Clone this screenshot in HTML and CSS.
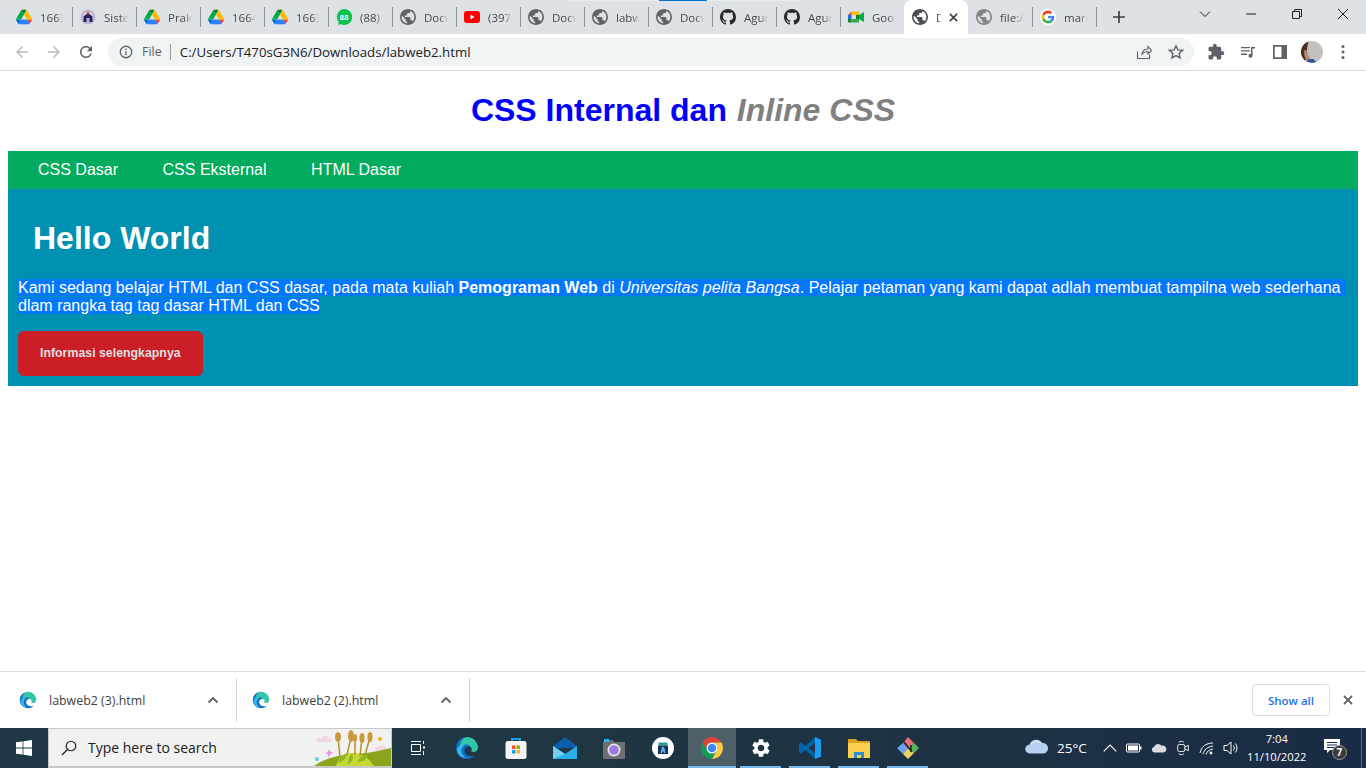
FILE: index.html
```html
<!DOCTYPE html>
<html lang="en">
<head>
    <meta charset="utf-8">
    <meta name="viewport" content="width=device-width, initial-scale=1.0">
    <title>labweb2</title>
    <link rel="stylesheet" href="styles.css">
</head>
<body>
    <svg class="sprite" aria-hidden="true">
        <symbol id="drive" viewBox="0 0 87.3 78">
            <path d="m6.6 66.85 3.85 6.65c.8 1.4 1.95 2.5 3.3 3.3l13.75-23.8h-27.5c0 1.55.4 3.1 1.2 4.5z" fill="#0066da"/>
            <path d="m43.65 25-13.75-23.8c-1.35.8-2.5 1.9-3.3 3.3l-25.4 44a9.06 9.06 0 0 0 -1.2 4.5h27.5z" fill="#00ac47"/>
            <path d="m73.55 76.8c1.35-.8 2.5-1.9 3.3-3.3l1.6-2.75 7.65-13.25c.8-1.4 1.2-2.95 1.2-4.5h-27.502l5.852 11.5z" fill="#ea4335"/>
            <path d="m43.65 25 13.75-23.8c-1.35-.8-2.9-1.2-4.5-1.2h-18.5c-1.6 0-3.15.45-4.5 1.2z" fill="#00832d"/>
            <path d="m59.8 53h-32.3l-13.75 23.8c1.35.8 2.9 1.2 4.5 1.2h50.8c1.6 0 3.15-.45 4.5-1.2z" fill="#2684fc"/>
            <path d="m73.4 26.5-12.7-22c-.8-1.4-1.95-2.5-3.3-3.3l-13.75 23.8 16.15 28h27.45c0-1.55-.4-3.1-1.2-4.5z" fill="#ffba00"/>
        </symbol>
        <symbol id="globe" viewBox="2 2 20 20">
            <path fill="currentColor" d="M12 2C6.48 2 2 6.48 2 12s4.48 10 10 10 10-4.48 10-10S17.52 2 12 2zm-1 17.93c-3.95-.49-7-3.85-7-7.93 0-.62.08-1.21.21-1.79L9 15v1c0 1.1.9 2 2 2v1.93zm6.9-2.54c-.26-.81-1-1.39-1.9-1.39h-1v-3c0-.55-.45-1-1-1H8v-2h2c.55 0 1-.45 1-1V7h2c1.1 0 2-.9 2-2v-.41c2.93 1.19 5 4.06 5 7.41 0 2.08-.8 3.97-2.1 5.39z"/>
        </symbol>
        <symbol id="github" viewBox="0 0 16 16">
            <path fill="#24292f" d="M8 0C3.58 0 0 3.58 0 8c0 3.54 2.29 6.53 5.47 7.59.4.07.55-.17.55-.38 0-.19-.01-.82-.01-1.49-2.01.37-2.53-.49-2.69-.94-.09-.23-.48-.94-.82-1.13-.28-.15-.68-.52-.01-.53.63-.01 1.08.58 1.23.82.72 1.21 1.87.87 2.33.66.07-.52.28-.87.51-1.07-1.78-.2-3.64-.89-3.64-3.95 0-.87.31-1.59.82-2.15-.08-.2-.36-1.02.08-2.12 0 0 .67-.21 2.2.82.64-.18 1.32-.27 2-.27.68 0 1.36.09 2 .27 1.53-1.04 2.2-.82 2.2-.82.44 1.1.16 1.92.08 2.12.51.56.82 1.27.82 2.15 0 3.07-1.87 3.75-3.65 3.95.29.25.54.73.54 1.48 0 1.07-.01 1.93-.01 2.2 0 .21.15.46.55.38A8.013 8.013 0 0016 8c0-4.42-3.58-8-8-8z"/>
        </symbol>
        <symbol id="edge" viewBox="0 0 24 24">
            <path fill="#0f6fc6" d="M12 1C5.900 1 1 5.900 1 12s4.900 11 11 11c3.200 0 6-1.300 8-3.400-3.700 1.400-8.200.8-10-2.600-1.200-2.400-.2-5.600 2.800-6.400C14.500 10 16 10.800 17 12 16.500 9 14 7.500 11.500 7.500 8 7.500 5.500 9.800 4.500 13 4.500 6.500 8 1 12 1z"/>
            <path fill="#2fc7a8" d="M12 1c5.500 0 10 3.900 11 9.500.4 3-1.500 5.500-4.600 5.500-1.300 0-2.200-.4-2.300-.9 1.100-1 .8-3-.5-4.400C13.800 8.500 10 7.700 7 9.500 5.600 10.300 4.600 11.500 4 13 4.500 6.500 8 1 12 1z"/>
            <path fill="#37b5ee" d="M2 14c.5-2.500 2-4.500 5-5 2-.3 3 .3 3 .3-2.500 1-4 3.500-3.700 6.200.3 2.500 2 4.700 4.700 6.400C6 22 2.500 18.500 2 14z"/>
        </symbol>
    </svg>

    <header class="tabstrip">
        <div class="tabstrip-top"><span></span></div>
        <div class="tab"><svg class="fav"><use href="#drive"/></svg><span class="tab-title">1663 Drive</span></div>
        <div class="tab">
            <svg class="fav" viewBox="0 0 16 16"><circle cx="8" cy="8" r="7.500" fill="#b9b6d2"/><circle cx="8" cy="8" r="5.500" fill="#d5d3e4"/><path fill="#25235f" d="M8 4 12.500 7.500V13h-9V7.500z"/><rect x="6.500" y="9" width="3" height="4" fill="#b9b6d2"/><circle cx="8" cy="4" r="1.300" fill="#d8503f"/></svg>
            <span class="tab-title">Sistem Info</span>
        </div>
        <div class="tab"><svg class="fav"><use href="#drive"/></svg><span class="tab-title">Praktikum</span></div>
        <div class="tab"><svg class="fav"><use href="#drive"/></svg><span class="tab-title">1664 Drive</span></div>
        <div class="tab"><svg class="fav"><use href="#drive"/></svg><span class="tab-title">1663 Drive</span></div>
        <div class="tab">
            <svg class="fav" viewBox="0 0 16 16"><path fill="#08c14f" d="M8 0a8 8 0 1 1-3.700 15L2 16l.8-2.900A8 8 0 0 1 8 0z"/><text x="8" y="11" class="wa-count">88</text></svg>
            <span class="tab-title">(88) WhatsApp</span>
        </div>
        <div class="tab"><svg class="fav globe"><use href="#globe"/></svg><span class="tab-title">Document</span></div>
        <div class="tab">
            <svg class="fav" viewBox="0 0 16 16"><rect y="2" width="16" height="12" rx="3" fill="#f00"/><path fill="#fff" d="M6.500 5.500 10.500 8l-4 2.500z"/></svg>
            <span class="tab-title">(397) YouTube</span>
        </div>
        <div class="tab"><svg class="fav globe"><use href="#globe"/></svg><span class="tab-title">Document</span></div>
        <div class="tab"><svg class="fav globe"><use href="#globe"/></svg><span class="tab-title">labweb.html</span></div>
        <div class="tab"><svg class="fav globe"><use href="#globe"/></svg><span class="tab-title">Document</span></div>
        <div class="tab"><svg class="fav"><use href="#github"/></svg><span class="tab-title">Agung/web</span></div>
        <div class="tab"><svg class="fav"><use href="#github"/></svg><span class="tab-title">Agung/web</span></div>
        <div class="tab tab-before-active">
            <svg class="fav" viewBox="0 0 16 16"><path fill="#fbbc04" d="M3.500 2.500H11V6H3.500z"/><path fill="#ea4335" d="M3.500 2.500V6H0z"/><path fill="#1a73e8" d="M0 6h3.500v4H0z"/><path fill="#188038" d="M0 10h3.500v3.500H1a1 1 0 0 1-1-1z"/><path fill="#34a853" d="M3.500 10H11v3.500H3.500z"/><path fill="#00ac47" d="M11 6 16 3v10l-5-3z"/><rect x="8" y="6" width="3" height="4" fill="#00832d"/></svg>
            <span class="tab-title">Google Meet</span>
        </div>
        <div class="tab tab-active">
            <svg class="fav globe-dark"><use href="#globe"/></svg>
            <span class="tab-title">Document</span>
            <svg class="tab-close" viewBox="0 0 10 10"><path d="M1 1l8 8M9 1l-8 8"/></svg>
        </div>
        <div class="tab"><svg class="fav globe-light"><use href="#globe"/></svg><span class="tab-title">file:///C:/</span></div>
        <div class="tab">
            <svg class="fav" viewBox="-6 -6 60 60"><circle cx="24" cy="24" r="30" fill="#fff"/>
                <path fill="#EA4335" d="M24 9.500c3.540 0 6.710 1.220 9.210 3.600l6.850-6.850C35.900 2.380 30.470 0 24 0 14.620 0 6.510 5.380 2.560 13.220l7.980 6.190C12.430 13.720 17.740 9.500 24 9.500z"/>
                <path fill="#4285F4" d="M46.980 24.550c0-1.570-.15-3.090-.38-4.550H24v9.020h12.940c-.58 2.960-2.260 5.480-4.780 7.180l7.730 6c4.510-4.180 7.090-10.360 7.090-17.650z"/>
                <path fill="#FBBC05" d="M10.530 28.590c-.48-1.450-.76-2.990-.76-4.590s.27-3.140.76-4.590l-7.980-6.190C.92 16.460 0 20.120 0 24c0 3.880.92 7.540 2.560 10.780l7.970-6.190z"/>
                <path fill="#34A853" d="M24 48c6.480 0 11.930-2.130 15.890-5.810l-7.730-6c-2.150 1.450-4.920 2.300-8.160 2.300-6.260 0-11.570-4.220-13.470-9.910l-7.980 6.190C6.510 42.620 14.620 48 24 48z"/>
            </svg>
            <span class="tab-title">markdown</span>
        </div>
        <svg class="new-tab" viewBox="0 0 12 12"><path d="M6 0v12M0 6h12"/></svg>
        <div class="window-controls">
            <svg viewBox="0 0 12 12"><path d="M1 3.500 6 8.500l5-5"/></svg>
            <svg viewBox="0 0 12 12"><path d="M1 6h10"/></svg>
            <svg viewBox="0 0 12 12"><path d="M1.500 3.500h7v7h-7zM3.500 3.500v-2h7v7h-2"/></svg>
            <svg viewBox="0 0 12 12"><path d="M1 1l10 10M11 1 1 11"/></svg>
        </div>
    </header>

    <div class="toolbar">
        <svg class="tool tool-off" viewBox="0 0 24 24"><path d="M20 11H7.830l5.590-5.590L12 4l-8 8 8 8 1.410-1.410L7.830 13H20v-2z"/></svg>
        <svg class="tool tool-off" viewBox="0 0 24 24"><path d="M12 4l-1.410 1.410L16.170 11H4v2h12.170l-5.580 5.590L12 20l8-8z"/></svg>
        <svg class="tool" viewBox="0 0 24 24"><path d="M17.650 6.350C16.200 4.900 14.210 4 12 4c-4.420 0-7.990 3.580-7.990 8s3.570 8 7.990 8c3.730 0 6.840-2.550 7.730-6h-2.080c-.82 2.330-3.040 4-5.650 4-3.310 0-6-2.690-6-6s2.690-6 6-6c1.660 0 3.140.69 4.220 1.780L13 11h7V4l-2.350 2.350z"/></svg>
        <div class="omnibox">
            <svg class="omni-info" viewBox="0 0 14 14"><circle cx="7" cy="7" r="5.750"/><path d="M7 6.200v4M7 3.600v1.400"/></svg>
            <span class="omni-file">File</span>
            <span class="omni-url">C:/Users/T470sG3N6/Downloads/labweb2.html</span>
            <svg class="omni-share" viewBox="0 0 16 16"><path d="M1.500 7.500v7h12v-4M6 10c.5-3 2.500-5 6-5V2.500L15.500 6.500 12 10V7.500C9.500 7.500 7.500 8.500 6 10z"/></svg>
            <svg class="omni-star" viewBox="0 0 16 16"><path d="M8 1.800l1.900 4.100 4.500.5-3.300 3 .9 4.500L8 11.600l-4 2.300.9-4.500-3.300-3 4.500-.5z"/></svg>
        </div>
        <svg class="tool tool-ext" viewBox="0 0 24 24"><path d="M20.500 11H19V7c0-1.100-.9-2-2-2h-4V3.500C13 2.120 11.880 1 10.500 1S8 2.120 8 3.500V5H4c-1.100 0-1.990.9-1.990 2v3.800H3.500c1.490 0 2.700 1.210 2.700 2.700s-1.210 2.700-2.700 2.700H2V20c0 1.100.9 2 2 2h3.800v-1.500c0-1.490 1.210-2.700 2.700-2.700 1.490 0 2.700 1.210 2.700 2.700V22H17c1.100 0 2-.9 2-2v-4h1.500c1.380 0 2.500-1.120 2.500-2.500S21.880 11 20.500 11z"/></svg>
        <svg class="tool tool-media" viewBox="0 0 16 16"><path d="M1 3h9v1.300H1zM1 6.300h9v1.300H1zM1 9.600h6v1.300H1zM11 3h4v1.600h-2.500v7.200a2 2 0 1 1-1.500-1.900z"/></svg>
        <svg class="tool tool-panel" viewBox="0 0 14 14"><path fill-rule="evenodd" d="M0 0h14v14H0zM1.700 1.700v10.600h6.800V1.700z"/></svg>
        <svg class="avatar" viewBox="0 0 22 22"><circle cx="11" cy="11" r="11" fill="#c4c1bc"/><path fill="#4a3126" d="M7.500.6C3 2 0 6.200 0 11c0 3.300 1.400 6.200 3.700 8.200l5-1.200C7 15 5.500 12 6 8c.2-2.500 1-5 1.500-7.400z"/><path fill="#b98a70" d="M3.500 9c1.500-.5 2.500 1 3 3s1.500 4 2.500 6l-3 2C3.500 17 2.500 12 3.500 9z"/><path fill="#2e4fa3" d="M5 20c2-1.800 5-2.500 8-1.500L15 21a11 11 0 0 1-10-1z"/></svg>
        <svg class="tool tool-menu" viewBox="0 0 4 16"><circle cx="2" cy="2.500" r="1.500"/><circle cx="2" cy="8" r="1.500"/><circle cx="2" cy="13.500" r="1.500"/></svg>
    </div>

    <main class="page">
        <h1 class="page-title">CSS Internal dan <em>Inline CSS</em></h1>
        <nav class="menu">
            <a href="#">CSS Dasar</a>
            <a href="#">CSS Eksternal</a>
            <a href="#">HTML Dasar</a>
        </nav>
        <section class="hero">
            <h1>Hello World</h1>
            <p><span class="picked">Kami sedang belajar HTML dan CSS dasar, pada mata kuliah <b>Pemograman Web</b> di <i>Universitas pelita Bangsa</i>. Pelajar petaman yang kami dapat adlah membuat tampilna web sederhana&nbsp; dlam rangka tag tag dasar HTML dan CSS</span></p>
            <a class="btn" href="#">Informasi selengkapnya</a>
        </section>
    </main>

    <div class="downloads">
        <div class="download">
            <svg class="dl-icon"><use href="#edge"/></svg>
            <span class="dl-name">labweb2 (3).html</span>
            <svg class="dl-caret" viewBox="0 0 12 8"><path d="M1.500 6.500 6 2l4.500 4.500"/></svg>
        </div>
        <div class="download">
            <svg class="dl-icon"><use href="#edge"/></svg>
            <span class="dl-name">labweb2 (2).html</span>
            <svg class="dl-caret" viewBox="0 0 12 8"><path d="M1.500 6.500 6 2l4.500 4.500"/></svg>
        </div>
        <button class="show-all">Show all</button>
        <svg class="dl-close" viewBox="0 0 10 10"><path d="M1 1l8 8M9 1l-8 8"/></svg>
    </div>

    <footer class="taskbar">
        <div class="start">
            <svg viewBox="0 0 16 16"><path fill="#fff" d="M0 2.300 6.600 1.400V7.600H0zM7.400 1.300 16 0V7.600H7.400zM0 8.400H6.600V14.600L0 13.700zM7.400 8.400H16V16L7.400 14.700z"/></svg>
        </div>
        <div class="search">
            <svg class="search-glass" viewBox="0 0 16 16"><circle cx="10" cy="6" r="4.750"/><path d="M6.500 9.500 1 15"/></svg>
            <span>Type here to search</span>
            <svg class="search-art" viewBox="0 0 77 37">
                <path fill="#f0d8dc" d="M2 12c0-3 3-4 5-3 2-3 7-3 8 0 3 0 4 3 2 4H3c-1 0-1-1-1-1zM61 20c0-2 3-3 4-2 2-3 6-2 7 1 2 0 2 3 1 3H62z"/>
                <path fill="#e98cf0" d="M15 20l1.500 3 3.500 1-3.500 1L15 29l-1-4-3-1 3-1z"/>
                <circle cx="3" cy="30" r="2" fill="#5cd0e0"/><circle cx="66" cy="10" r="2" fill="#f7a90c"/>
                <path fill="#8aa51c" d="M0 37c8-6 20-10 32-11 14-1 30-3 45-7v18z"/>
                <path fill="#c4d732" d="M22 37c2-8 8-14 16-13 10 0 16 4 22 13z"/>
                <path stroke="#b59224" stroke-width="1.500" fill="none" d="M26 28 24 8M33 26l4-18M41 26V8M46 27l2-18M50 30 56 8"/>
                <g fill="#c99a3c"><ellipse cx="24" cy="8" rx="3" ry="5"/><ellipse cx="37" cy="7" rx="3" ry="6"/><ellipse cx="41" cy="9" rx="2" ry="4"/><ellipse cx="48" cy="9" rx="2.500" ry="5"/><ellipse cx="56" cy="8" rx="2.500" ry="5"/></g>
                <path fill="#8fb622" d="M24 34c2-5 6-10 9-9-1 4-3 7-9 9zM44 33c1-4 4-7 10-8-1 5-4 8-10 8zM34 35c0-4 1-8 4-10 2 4 1 8-4 10z"/>
            </svg>
        </div>
        <div class="task-apps">
            <div class="app">
                <svg class="ico" viewBox="0 0 16 16"><path fill="none" stroke="#fff" d="M1 1.500h10M1 14.500h10M1.500 4.500h9v7h-9zM13.500 1v3M13.500 11v4"/><rect x="13" y="6.500" width="2" height="2" fill="#fff"/></svg>
            </div>
            <div class="app">
                <svg class="ico ico-big"><use href="#edge"/></svg>
            </div>
            <div class="app">
                <svg class="ico ico-big" viewBox="0 0 24 24"><path fill="none" stroke="#1aa3e8" stroke-width="1.800" d="M8 7V3h8v4"/><rect x="1.500" y="5" width="21" height="18" rx="2.500" fill="#f4f4f4"/><rect x="8" y="9.500" width="3.500" height="3.500" fill="#f25022"/><rect x="12.500" y="9.500" width="3.500" height="3.500" fill="#7fba00"/><rect x="8" y="14" width="3.500" height="3.500" fill="#00a4ef"/><rect x="12.500" y="14" width="3.500" height="3.500" fill="#ffb900"/></svg>
            </div>
            <div class="app">
                <svg class="ico ico-big" viewBox="0 0 24 24"><path fill="#0d5ea8" d="M12 1 24 10v2H0v-2z"/><path fill="#29aeea" d="M0 10l12 8 12-8v13H0z"/><path fill="#6fd0f5" d="M0 10l12 8-12 5z"/></svg>
            </div>
            <div class="app">
                <svg class="ico ico-big" viewBox="0 0 24 24"><path fill="#6d6f72" d="M1 6h4l1-2h5l1 2h11v17H1z"/><path fill="#2cb5e8" d="M2 3h5v3H2z"/><circle cx="12" cy="14" r="6.500" fill="#e8e8e8"/><circle cx="12" cy="14" r="4.800" fill="#9a7be0"/></svg>
            </div>
            <div class="app">
                <svg class="ico ico-big" viewBox="0 0 24 24"><circle cx="12" cy="12" r="11" fill="#fff"/><path fill="#1fa088" d="M7.500 6.500h9v3h-9z"/><path fill="#17365f" d="M7 9.500h10v8.500H7z"/><path fill="#5fb0e8" d="M11 11h2l1.500 6h-1.500l-.3-1.500h-1.400L11 17H9.500z"/></svg>
            </div>
            <div class="app app-active running">
                <svg class="ico ico-big" viewBox="0 0 48 48">
                    <path fill="#db4437" d="M5 13A22 22 0 0 1 43 13H24A11 11 0 0 0 14.500 29.500Z"/>
                    <path fill="#0f9d58" d="M5 13L14.500 29.500A11 11 0 0 0 33.500 29.500L24 46A22 22 0 0 1 5 13Z"/>
                    <path fill="#ffcd40" d="M43 13A22 22 0 0 1 24 46L33.500 29.500A11 11 0 0 0 24 13Z"/>
                    <circle cx="24" cy="24" r="11" fill="#fff"/><circle cx="24" cy="24" r="8.500" fill="#4285f4"/>
                </svg>
            </div>
            <div class="app running">
                <svg class="ico ico-big gear" viewBox="0 0 24 24"><path d="M19.140 12.940c.04-.3.06-.61.06-.94 0-.32-.02-.64-.07-.94l2.030-1.580c.18-.14.23-.41.12-.61l-1.920-3.320c-.12-.22-.37-.29-.59-.22l-2.390.96c-.5-.38-1.030-.7-1.620-.94l-.36-2.540c-.04-.24-.24-.41-.48-.41h-3.840c-.24 0-.43.17-.47.41l-.36 2.540c-.59.24-1.130.57-1.620.94l-2.390-.96c-.22-.08-.47 0-.59.22L2.740 8.870c-.12.21-.08.47.12.61l2.030 1.580c-.05.3-.09.63-.09.94s.02.64.07.94l-2.030 1.580c-.18.14-.23.41-.12.61l1.920 3.320c.12.22.37.29.59.22l2.390-.96c.5.38 1.030.7 1.620.94l.36 2.540c.05.24.24.41.48.41h3.840c.24 0 .44-.17.47-.41l.36-2.540c.59-.24 1.130-.56 1.620-.94l2.390.96c.22.08.47 0 .59-.22l1.920-3.320c.12-.22.07-.47-.12-.61l-2.010-1.580zM12 15.600c-1.980 0-3.600-1.620-3.600-3.600s1.620-3.600 3.600-3.600 3.600 1.620 3.600 3.600-1.620 3.600-3.600 3.600z"/></svg>
            </div>
            <div class="app running">
                <svg class="ico ico-big" viewBox="0 0 24 24"><path fill="#0065a9" d="M17 1 7.500 10 3 6.500 1 7.500v9L3 17.500 7.500 14l9.500 9 6-2.500v-17zM17 7v10l-6.500-5z"/><path fill="#1f9cf0" d="M17 1l6 3v16.500L17 23z"/></svg>
            </div>
            <div class="app running">
                <svg class="ico ico-big" viewBox="0 0 24 24"><path fill="#d9a520" d="M1 3h8l2 2h12v3H1z"/><path fill="#fbd04f" d="M1 7h22v15H1z"/><path fill="#2e8fd0" d="M7 16h10v6h-3v-3h-4v3H7z"/></svg>
            </div>
            <div class="app running">
                <svg class="ico ico-big" viewBox="0 0 24 24"><path fill="#e8707a" d="M12 1 18 7l-6 5-5-5z"/><path fill="#6f9ff0" d="M1 12l6-5 5 5-5 6z"/><path fill="#e9d264" d="M12 12l6 5-6 6-5-5z"/><path fill="#5bb45c" d="M12 12l6-5 5 5-5 5z"/><path fill="none" stroke="#222" stroke-width="1.500" d="M8 6l8 10M15 9v7"/></svg>
            </div>
        </div>
        <div class="tray">
            <svg class="tray-cloud" viewBox="0 0 24 16"><path fill="#b7d2f0" d="M5 15.500a4.500 4.500 0 0 1-.5-9A7 7 0 0 1 17 5a5.300 5.300 0 0 1 1.500 10.500z"/><path fill="#dfeafa" d="M6 6a7 7 0 0 1 11-1c-3-1-8-1-11 1z"/></svg>
            <span class="tray-temp">25°C</span>
            <svg class="tray-ico tray-caret" viewBox="0 0 14 14"><path d="M1.500 10 7 4.500 12.500 10"/></svg>
            <svg class="tray-ico" viewBox="0 0 16 14"><rect x=".5" y="3" width="13" height="8" rx="1"/><rect x="2" y="4.500" width="10" height="5" class="solid"/><rect x="14" y="5.500" width="1.500" height="3" class="solid"/></svg>
            <svg class="tray-ico" viewBox="0 0 18 14"><path class="solid soft" d="M4 12a3.300 3.300 0 0 1-.5-6.500A5 5 0 0 1 12 4.500 3.800 3.800 0 0 1 14.500 12z"/></svg>
            <svg class="tray-ico" viewBox="0 0 14 18"><rect x="1" y="5" width="8" height="8" rx="2"/><path d="M9 8l4-2v6l-4-2M2 2.500C4 1 6 1 8 2.500M2 15.500c2 1.500 4 1.500 6 0"/></svg>
            <svg class="tray-ico" viewBox="0 0 16 16"><path d="M1 13C2 7 7 3 14 3M4 14c1-4 4-7 10-8M7 14.500c1-3 3-5 7-5.500"/><circle cx="12" cy="13" r="1.400" class="solid"/></svg>
            <svg class="tray-ico" viewBox="0 0 16 16"><path d="M1 5.500h3L8 2v12l-4-3.500H1zM10.500 5.500c1 1.500 1 3.500 0 5M12.500 3.500c2 2.500 2 6.500 0 9"/></svg>
            <div class="clock"><span>7:04</span><span>11/10/2022</span></div>
            <div class="notify">
                <svg viewBox="0 0 16 14"><path fill="#fff" fill-rule="evenodd" d="M0 0h16v11H6l-3 3v-3H0zM3 3v1h10V3zM3 5.500v1h10v-1zM3 8v1h7V8z"/></svg>
                <span class="notify-badge">7</span>
            </div>
            <div class="show-desktop"></div>
        </div>
    </footer>
</body>
</html>
```

FILE: styles.css
```css
* {
    box-sizing: border-box;
}

body {
    margin: 0;
    height: 100vh;
    display: flex;
    flex-direction: column;
    overflow: hidden;
    background: #ffffff;
    font-family: 'Liberation Sans', Arial, sans-serif;
}

.sprite {
    position: absolute;
    width: 0;
    height: 0;
}

/* browser tabs */
.tabstrip {
    position: relative;
    flex: none;
    height: 34px;
    display: flex;
    align-items: center;
    padding-left: 8px;
    background: #dee1e6;
    font-family: 'Open Sans', sans-serif;
}

.tabstrip-top {
    position: absolute;
    top: 0;
    left: 563px;
    width: 240px;
    height: 1px;
    background: #e6e8ec;
}

.tabstrip-top span {
    position: absolute;
    left: 96px;
    width: 48px;
    height: 1px;
    background: #0078d4;
}

.tab {
    position: relative;
    flex: none;
    width: 64px;
    height: 34px;
    display: flex;
    align-items: center;
    gap: 8px;
    padding: 0 8px;
    color: #45494e;
    font-size: 11.500px;
}

.tab::after {
    content: "";
    position: absolute;
    top: 7px;
    right: -1px;
    width: 1px;
    height: 20px;
    background: #8d9095;
}

.tab-before-active::after,
.tab-active::after {
    display: none;
}

.tab-active {
    background: #ffffff;
    border-radius: 8px 8px 0 0;
}

.fav {
    flex: none;
    width: 16px;
    height: 16px;
}

.globe {
    color: #5f6368;
}

.globe-dark {
    color: #4a4e53;
}

.globe-light {
    color: #80858a;
}

.wa-count {
    fill: #ffffff;
    font-size: 8px;
    font-weight: 700;
    text-anchor: middle;
    font-family: 'Liberation Sans', sans-serif;
}

.tab-title {
    flex: 1;
    min-width: 0;
    overflow: hidden;
    white-space: nowrap;
    -webkit-mask-image: linear-gradient(to right, #000 65%, transparent);
    mask-image: linear-gradient(to right, #000 65%, transparent);
}

.tab-active .tab-title {
    flex: none;
    width: 5px;
}

.tab-close {
    flex: none;
    width: 9px;
    height: 9px;
    fill: none;
    stroke: #3c4043;
    stroke-width: 1.800;
}

.new-tab {
    flex: none;
    width: 12px;
    height: 12px;
    margin-left: 17px;
    fill: none;
    stroke: #3c4043;
    stroke-width: 1.700;
}

.window-controls {
    margin-left: auto;
    display: flex;
    align-items: center;
    height: 34px;
    gap: 34px;
    padding-right: 17px;
    padding-bottom: 6px;
}

.window-controls svg {
    width: 12px;
    height: 12px;
    fill: none;
    stroke: #202124;
}

/* address bar */
.toolbar {
    flex: none;
    height: 37px;
    display: flex;
    align-items: center;
    padding: 0 0 1px 13px;
    background: #ffffff;
    border-bottom: 1px solid #dadce0;
}

.tool {
    flex: none;
    width: 18px;
    height: 18px;
    margin-right: 14px;
    fill: #5f6368;
}

.tool-off {
    fill: #b8bbbf;
}

.omnibox {
    flex: none;
    width: 1086px;
    height: 28px;
    margin: 0 13px 0 -1px;
    display: flex;
    align-items: center;
    padding-left: 11px;
    border-radius: 14px;
    background: #f0f3f4;
    font-family: 'Open Sans', sans-serif;
    font-size: 13.250px;
}

.omni-info {
    flex: none;
    width: 14px;
    height: 14px;
    fill: none;
    stroke: #5f6368;
    stroke-width: 1.300;
}

.omni-file {
    margin-left: 9px;
    padding-right: 8px;
    border-right: 1px solid #9a9da1;
    line-height: 16px;
    color: #5f6368;
    font-size: 12.500px;
}

.omni-url {
    margin-left: 9px;
    color: #202124;
}

.omni-share {
    flex: none;
    width: 16px;
    height: 16px;
    margin-left: auto;
    fill: none;
    stroke: #5f6368;
    stroke-width: 1.100;
}

.omni-star {
    flex: none;
    width: 16px;
    height: 16px;
    margin: 0 10px 0 16px;
    fill: none;
    stroke: #5f6368;
    stroke-width: 1.400;
}

.tool-ext {
    margin-right: 15px;
}

.tool-media {
    width: 16px;
    height: 16px;
    margin-right: 15px;
}

.tool-panel {
    width: 14px;
    height: 14px;
    margin: 0 14px 0 2px;
}

.avatar {
    flex: none;
    width: 22px;
    height: 22px;
    margin-right: 18px;
}

.tool-menu {
    width: 4px;
    height: 16px;
    margin: 0;
}

/* the page itself */
.page {
    flex: 1;
    min-height: 0;
    overflow: hidden;
    padding: 0 8px;
}

.page-title {
    margin: 21.440px 0;
    text-align: center;
    font-size: 32px;
    color: #0000ff;
}

.page-title em {
    padding-left: 1px;
    color: #808080;
}

.menu {
    display: flex;
    gap: 44.500px;
    padding: 10px 30px;
    background: #02ab5e;
}

.menu a {
    color: #ffffff;
    font-size: 16px;
    text-decoration: none;
}

.hero {
    padding: 10px;
    background: #0090b2;
    color: #ffffff;
}

.hero h1 {
    margin: 21.440px 0;
    padding-left: 15px;
    font-size: 32px;
}

.hero p {
    margin: 0 0 16px;
    font-size: 16px;
}

.picked {
    background: #0478fa;
}

.btn {
    display: inline-block;
    padding: 14px 22px;
    border-radius: 6px;
    background: #cb1e27;
    color: #dedede;
    font-size: 12.350px;
    font-weight: 700;
    line-height: 17px;
    text-decoration: none;
    vertical-align: top;
}

/* downloads shelf */
.downloads {
    flex: none;
    height: 57px;
    display: flex;
    align-items: center;
    padding-left: 4px;
    border-top: 1px solid #dadce0;
    background: #ffffff;
    font-family: 'Open Sans', sans-serif;
}

.download {
    flex: none;
    width: 233px;
    height: 44px;
    display: flex;
    align-items: center;
    padding-left: 15px;
    border-right: 1px solid #d0d2d5;
}

.dl-icon {
    flex: none;
    width: 18px;
    height: 18px;
}

.dl-name {
    margin-left: 12px;
    color: #3c4043;
    font-size: 12.400px;
}

.dl-caret {
    margin-left: auto;
    margin-right: 17px;
    width: 12px;
    height: 8px;
    fill: none;
    stroke: #5f6368;
    stroke-width: 1.800;
}

.show-all {
    margin-left: auto;
    width: 78px;
    height: 32px;
    background: #ffffff;
    border: 1px solid #dadce0;
    border-radius: 4px;
    color: #1a73e8;
    font-family: 'Open Sans', sans-serif;
    font-size: 11.500px;
    font-weight: 600;
}

.dl-close {
    width: 10px;
    height: 10px;
    margin: 0 13px;
    fill: none;
    stroke: #5f6368;
    stroke-width: 1.800;
}

/* windows taskbar */
.taskbar {
    flex: none;
    height: 40px;
    display: flex;
    background: linear-gradient(to right, #203845, #1f3542 50%, #1a2b45);
    font-family: 'Open Sans', sans-serif;
}

.start {
    flex: none;
    width: 48px;
    display: flex;
    align-items: center;
    justify-content: center;
}

.start svg {
    width: 16px;
    height: 16px;
}

.search {
    flex: none;
    width: 344px;
    display: flex;
    align-items: center;
    padding-left: 12px;
    background: #f1f1f1;
    border: 1px solid #c8c8c8;
    border-bottom-width: 2px;
    color: #202020;
    font-size: 14px;
}

.search-glass {
    flex: none;
    width: 16px;
    height: 16px;
    margin-right: 11px;
    fill: none;
    stroke: #202020;
    stroke-width: 1.200;
}

.search-art {
    width: 77px;
    height: 37px;
    margin-left: auto;
    align-self: flex-end;
}

.task-apps {
    display: flex;
    padding-left: 1px;
}

.app {
    position: relative;
    flex: none;
    width: 49px;
    display: flex;
    align-items: center;
    justify-content: center;
}

.app-active {
    width: 48px;
    margin-left: 1px;
    background: #4d5f69;
}

.running::after {
    content: "";
    position: absolute;
    left: 4px;
    right: 4px;
    bottom: 0;
    height: 2px;
    background: #76b9ed;
}

.app-active::after {
    left: 0;
    right: 0;
}

.ico {
    width: 16px;
    height: 16px;
}

.ico-big {
    width: 24px;
    height: 24px;
}

.gear {
    width: 22px;
    height: 22px;
    fill: #ffffff;
}

.tray {
    flex: 1;
    display: flex;
    align-items: center;
    padding-left: 93px;
    color: #ffffff;
}

.tray-cloud {
    flex: none;
    width: 24px;
    height: 16px;
    margin-top: -4px;
}

.tray-temp {
    width: 38px;
    margin-left: 8px;
    font-size: 13.500px;
}

.tray-ico {
    flex: none;
    width: 16px;
    height: 16px;
    margin-right: 8.300px;
    fill: none;
    stroke: #ffffff;
    stroke-width: 1;
}

.tray-ico .solid {
    fill: #ffffff;
    stroke: none;
}

.tray-ico .soft {
    fill: #d8dde2;
}

.tray-caret {
    margin-left: 7px;
}

.clock {
    flex: none;
    width: 64px;
    margin-left: -3px;
    display: flex;
    flex-direction: column;
    align-items: center;
    gap: 2px;
    font-size: 11.200px;
    line-height: 16px;
}

.notify {
    position: relative;
    flex: none;
    width: 18px;
    height: 16px;
    margin-left: 15px;
    margin-top: -2px;
}

.notify svg {
    display: block;
    width: 16px;
    height: 14px;
}

.notify-badge {
    position: absolute;
    left: 8px;
    top: 6px;
    width: 15px;
    height: 15px;
    border-radius: 50%;
    background: #3a3a3a;
    border: 1px solid #9a9a9a;
    font-size: 10px;
    font-weight: 700;
    line-height: 13px;
    text-align: center;
}

.show-desktop {
    align-self: stretch;
    width: 1px;
    margin-left: auto;
    margin-right: 4px;
    background: #5a6878;
}
```
